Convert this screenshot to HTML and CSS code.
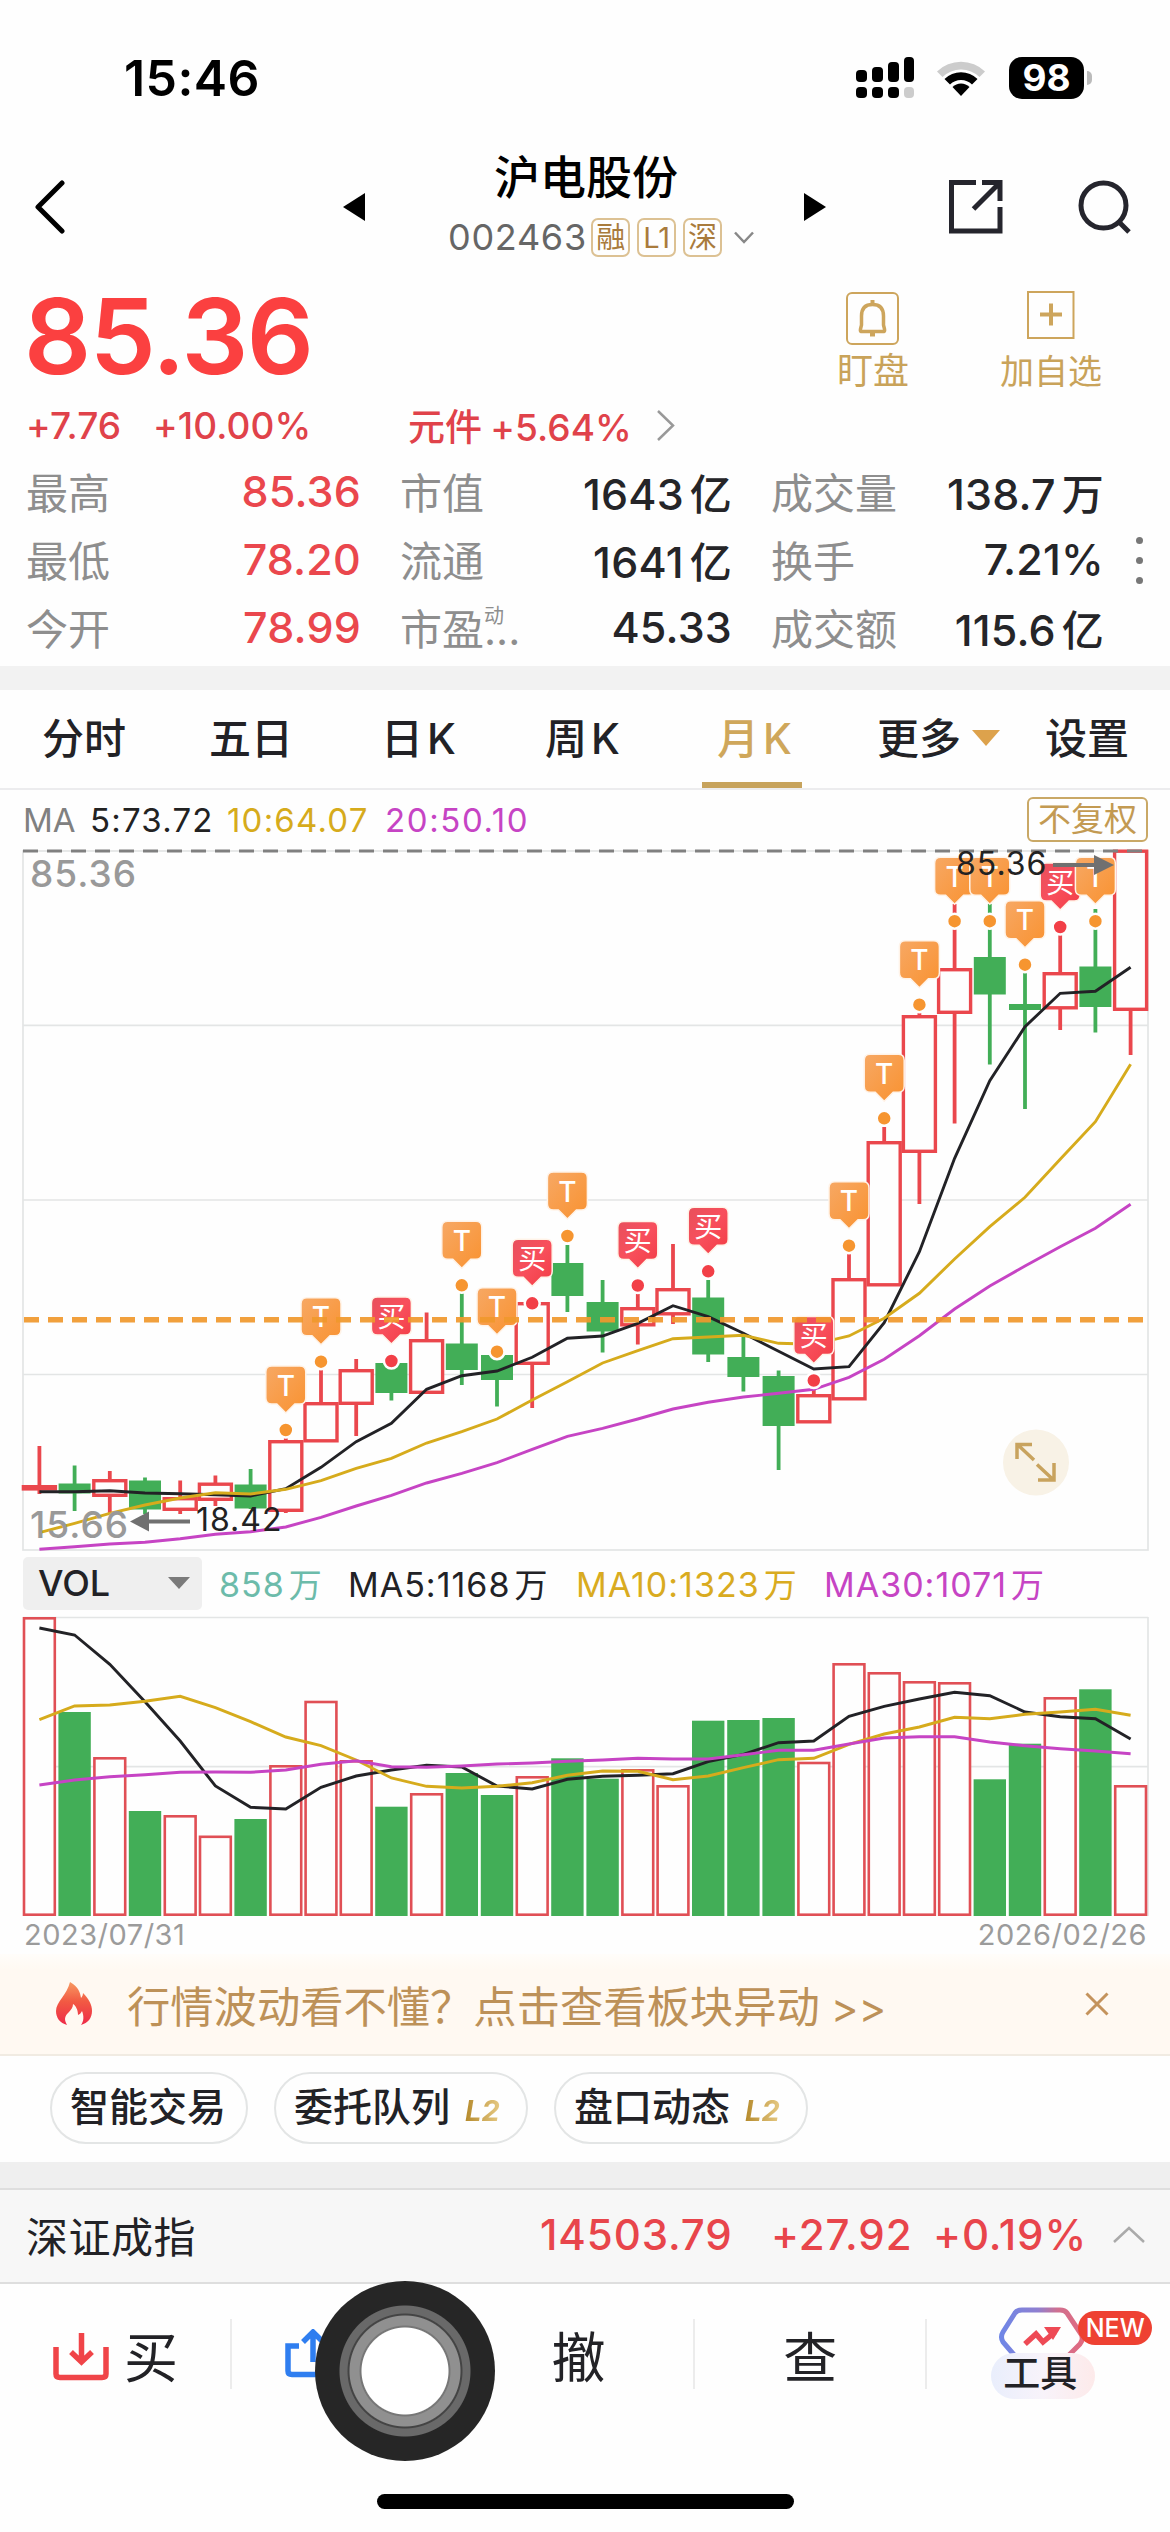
FILE: index.html
```html
<!DOCTYPE html>
<html lang="zh-CN">
<head>
<meta charset="UTF-8">
<meta name="viewport" content="width=device-width, initial-scale=1.0">
<title>沪电股份 002463</title>
<link rel="stylesheet" href="styles.css">
</head>
<body>
<div class="status-bar">
  <span class="time">15:46</span>
  <svg class="signal" width="54" height="42" viewBox="0 0 54 42">
    <rect x="0" y="13" width="11" height="12" rx="4"/>
    <rect x="16" y="10" width="11" height="15" rx="4"/>
    <rect x="32" y="5" width="11" height="20" rx="4"/>
    <rect x="48" y="0" width="10" height="25" rx="4"/>
    <rect x="0" y="30" width="11" height="11" rx="4"/>
    <rect x="16" y="30" width="11" height="11" rx="4"/>
    <rect x="32" y="30" width="11" height="11" rx="4"/>
    <rect x="48" y="30" width="10" height="11" rx="4" fill="#cccccc"/>
  </svg>
  <svg class="wifi" width="50" height="38" viewBox="0 0 50 38">
    <path d="M1 12.500A34.500 34.500 0 0 1 49 12.500L43.500 18A26.500 26.500 0 0 0 6.500 18Z" fill="#cccccc"/>
    <path d="M8.500 20A23.500 23.500 0 0 1 41.500 20L36 25.500A15.500 15.500 0 0 0 14 25.500Z"/>
    <path d="M16.500 28A12 12 0 0 1 33.500 28L25 37Z"/>
  </svg>
  <span class="battery">98</span>
  <span class="battery-nub"></span>
</div>

<div class="header">
  <svg class="back" width="32" height="54" viewBox="0 0 32 54"><path d="M28 3L4 27L28 51"/></svg>
  <svg class="prev" width="22" height="28" viewBox="0 0 22 28"><path d="M22 0V28L0 14Z"/></svg>
  <div class="title-box">
    <h1>沪电股份</h1>
    <div class="code-row">
      <span class="code">002463</span>
      <span class="tag">融</span>
      <span class="tag">L1</span>
      <span class="tag">深</span>
      <svg width="20" height="13" viewBox="0 0 20 13"><path d="M1 1.500L10 11L19 1.500"/></svg>
    </div>
  </div>
  <svg class="next" width="22" height="28" viewBox="0 0 22 28"><path d="M0 0V28L22 14Z"/></svg>
  <svg class="share" width="54" height="54" viewBox="0 0 54 54">
    <path d="M27 2.500H2.500V51H51V27M33 2.500H51V21M49.500 4L24.500 29"/>
  </svg>
  <svg class="search" width="54" height="54" viewBox="0 0 54 54">
    <circle cx="25.500" cy="25.500" r="22.500"/><path d="M41 42L51 52"/>
  </svg>
</div>

<div class="quote">
  <div class="price-box">
    <div class="price">85.36</div>
    <div class="change-row">
      <span class="chg">+7.76</span>
      <span class="pct">+10.00%</span>
      <span class="sector">元件 <b>+5.64%</b></span>
      <svg width="18" height="31" viewBox="0 0 18 31"><path d="M1 1L16 15.500L1 30"/></svg>
    </div>
  </div>
  <div class="action watch">
    <svg width="54" height="54" viewBox="0 0 54 54">
      <rect x="1" y="1" width="51" height="51" rx="5" stroke-width="2"/>
      <path d="M16 39.500C13 39.500 15 36 15.500 33V24C15.500 16 20 12.500 26.500 12.500S37.500 16 37.500 24V33C38 36 40 39.500 37 39.500Z" stroke-width="3.500"/>
      <path d="M26.500 8V12M24 42.500H29" stroke-width="4"/>
    </svg>
    <span>盯盘</span>
  </div>
  <div class="action add">
    <svg width="48" height="48" viewBox="0 0 48 48">
      <rect x="1" y="1" width="45.500" height="46" stroke-width="2"/>
      <path d="M24 12.500V34.500M13 23.500H35" stroke-width="4"/>
    </svg>
    <span>加自选</span>
  </div>
</div>

<div class="stats">
  <div class="cell"><span>最高</span><b class="up">85.36</b></div>
  <div class="cell"><span>市值</span><b>1643<i>亿</i></b></div>
  <div class="cell"><span>成交量</span><b>138.7<i>万</i></b></div>
  <div class="cell"><span>最低</span><b class="up">78.20</b></div>
  <div class="cell"><span>流通</span><b>1641<i>亿</i></b></div>
  <div class="cell"><span>换手</span><b>7.21%</b></div>
  <div class="cell"><span>今开</span><b class="up">78.99</b></div>
  <div class="cell"><span>市盈<sup>动</sup>...</span><b>45.33</b></div>
  <div class="cell"><span>成交额</span><b>115.6<i>亿</i></b></div>
  <div class="more-dots"><em></em><em></em><em></em></div>
</div>

<div class="tabs">
  <span>分时</span>
  <span>五日</span>
  <span>日<i>K</i></span>
  <span>周<i>K</i></span>
  <span class="active">月<i>K</i></span>
  <span class="more">更多</span>
  <span>设置</span>
</div>

<div class="ma-row">
  <span class="ma-name">MA</span>
  <span class="ma5">5:73.72</span>
  <span class="ma10">10:64.07</span>
  <span class="ma20">20:50.10</span>
  <span class="adjust">不复权</span>
</div>

<svg class="kline" id="kline" width="1170" height="708" viewBox="0 845 1170 708">
  <defs>
    <linearGradient id="gT" x1="0" y1="0" x2="1" y2="1">
      <stop offset="0" stop-color="#f7a864"/><stop offset="1" stop-color="#f99230"/>
    </linearGradient>
    <linearGradient id="gB" x1="0" y1="0" x2="1" y2="1">
      <stop offset="0" stop-color="#e8505c"/><stop offset="0.500" stop-color="#f84f5c"/><stop offset="1" stop-color="#f23c44"/>
    </linearGradient>
  </defs>
</svg>

<div class="vol-row">
  <span class="vol-select">VOL</span>
  <span class="vol-now">858<i>万</i></span>
  <span class="vol-ma5">MA5:1168<i>万</i></span>
  <span class="vol-ma10">MA10:1323<i>万</i></span>
  <span class="vol-ma30">MA30:1071<i>万</i></span>
</div>

<svg class="volume" id="volume" width="1170" height="305" viewBox="0 1613 1170 305"></svg>

<div class="dates"><span>2023/07/31</span><span>2026/02/26</span></div>

<div class="banner">
  <svg class="flame" width="38" height="44" viewBox="0 0 38 44">
    <defs><linearGradient id="gF" x1="0" y1="0" x2="0" y2="1">
      <stop offset="0" stop-color="#f79a62"/><stop offset="0.450" stop-color="#f25a43"/><stop offset="1" stop-color="#ee2a48"/>
    </linearGradient></defs>
    <path fill="url(#gF)" d="M15 0C24 5 25 11 26 16C27 15 28 13 28 11C34 17 37 23 37 29C37 36 33 41 26 43C29 39 29 34 27 29C26 31 25 32 23 33C23 28 21 24 18 22C18 29 10 31 10 37C10 39 11 41 12 43C5 41 1 36 1 29C1 20 12 13 15 0Z"/>
  </svg>
  <span class="banner-text">行情波动看不懂？点击查看板块异动<i>&gt;&gt;</i></span>
  <svg class="close" width="24" height="24" viewBox="0 0 24 24"><path d="M1.500 1.500L22.500 22.500M22.500 1.500L1.500 22.500"/></svg>
</div>

<div class="chips">
  <span class="chip">智能交易</span>
  <span class="chip wide">委托队列<i>L2</i></span>
  <span class="chip wide">盘口动态<i>L2</i></span>
</div>

<div class="index-bar">
  <span class="idx-name">深证成指</span>
  <span class="idx-val">14503.79</span>
  <span class="idx-chg">+27.92</span>
  <span class="idx-pct">+0.19%</span>
  <svg width="32" height="17" viewBox="0 0 32 17"><path d="M1 16L16 2L31 16"/></svg>
</div>

<div class="trade-bar">
  <div class="trade buy">
    <svg width="56" height="50" viewBox="0 0 56 50">
      <path d="M3 15V42Q3 45.500 7 45.500H49Q53 45.500 53 42V15" stroke-width="5.500"/>
      <path d="M28.500 1V30M18 20L28.500 30L39 20" stroke-width="5.500"/>
    </svg>
    <span>买</span>
  </div>
  <div class="trade sell">
    <svg width="56" height="50" viewBox="0 0 56 50">
      <path d="M14 17H3V42Q3 45.500 7 45.500H49Q53 45.500 53 42V17H42" stroke-width="5.500"/>
      <path d="M28 33V3M18 13L28 3L38 13" stroke-width="5.500"/>
    </svg>
    <div class="touch"></div>
  </div>
  <div class="trade"><span>撤</span></div>
  <div class="trade"><span>查</span></div>
  <div class="trade tools">
    <svg width="88" height="52" viewBox="0 0 88 52">
      <defs><linearGradient id="gH" x1="0" y1="0" x2="1" y2="0">
        <stop offset="0" stop-color="#6f86e6"/><stop offset="0.450" stop-color="#8f7fd0"/><stop offset="0.700" stop-color="#d0708f"/><stop offset="1" stop-color="#e06a80"/>
      </linearGradient></defs>
      <path d="M17 49L5 35Q2 30 5 25L17 6Q19 3 24 3H62Q67 3 69 6L83 27Q86 32 82 37L70 49" fill="none" stroke="url(#gH)" stroke-width="5"/>
      <path d="M27 37L38 27L45 35L57 25" fill="none" stroke="#ee4a55" stroke-width="5.500"/>
      <path d="M46 20H63L55 33Z" fill="#ee4a55"/>
    </svg>
    <span class="tools-label">工具</span>
    <span class="new-badge">NEW</span>
  </div>
</div>
<div class="home-indicator"></div>
<script src="chart.js"></script>
</body>
</html>
```
FILE: styles.css
```css
* {
  box-sizing: border-box;
}

body {
  margin: 0;
  width: 1170px;
  height: 2532px;
  overflow: hidden;
  background-color: #fefefe;
  color: #222226;
  font-family: Inter, "Noto Sans CJK SC", sans-serif;
}

i, em {
  font-style: normal;
}

svg {
  display: block;
  flex: none;
}

span, b {
  white-space: nowrap;
}

/* status bar */
.status-bar {
  display: flex;
  align-items: center;
  height: 156px;
  padding-left: 124px;
  color: #000;
}

.time {
  width: 732px;
  font-size: 50px;
  font-weight: 600;
  letter-spacing: 0.4px;
}

.signal {
  overflow: visible;
}

.wifi {
  margin-left: 26px;
}

.battery {
  width: 75px;
  height: 42px;
  margin-left: 23px;
  border-radius: 13px;
  background-color: #000;
  color: #fff;
  font-size: 37px;
  font-weight: 700;
  line-height: 42px;
  text-align: center;
}

.battery-nub {
  width: 5px;
  height: 14px;
  margin-left: 3px;
  border-radius: 0 5px 5px 0;
  background-color: #bbb;
}

/* header */
.header {
  display: flex;
  align-items: center;
  height: 102px;
  padding-left: 34px;
}

.back path {
  fill: none;
  stroke: #000;
  stroke-width: 5;
  stroke-linecap: round;
  stroke-linejoin: round;
}

.prev {
  margin-left: 277px;
}

.title-box {
  width: 306px;
  margin-left: 83px;
}

.title-box h1 {
  margin: -8px 0 0;
  padding-left: 46px;
  color: #000;
  font-size: 46px;
  font-weight: 500;
  line-height: 56px;
}

.code-row {
  display: flex;
  align-items: center;
  height: 40px;
  margin-top: 12px;
}

.code {
  width: 144px;
  color: #666;
  font-size: 36px;
  letter-spacing: 0.7px;
}

.tag {
  width: 39px;
  height: 39px;
  margin-right: 7px;
  border: 2px solid #dcc193;
  border-radius: 7px;
  color: #a97b3c;
  font-size: 29px;
  line-height: 35px;
  text-align: center;
}

.code-row svg {
  margin-left: 5px;
}

.code-row path {
  fill: none;
  stroke: #888;
  stroke-width: 2.5;
}

.next {
  margin-left: 50px;
}

.share {
  margin-left: 123px;
}

.search {
  margin-left: 75px;
}

.share path,
.search path,
.search circle {
  fill: none;
  stroke: #25252d;
  stroke-width: 5;
}

/* price */
.quote {
  display: flex;
  height: 200px;
  padding-left: 26px;
}

.price-box {
  width: 811px;
}

.price {
  margin-top: 26px;
  margin-left: -2px;
  color: #fb4040;
  font-size: 105px;
  font-weight: 600;
  letter-spacing: -1.4px;
  line-height: 104px;
}

.change-row {
  display: flex;
  align-items: center;
  height: 50px;
  margin-top: 12px;
  color: #e0424a;
  font-size: 37px;
  font-weight: 500;
  letter-spacing: 0.1px;
}

.chg {
  width: 127px;
}

.pct {
  width: 255px;
}

.sector {
  width: 249px;
}

.sector b {
  margin-left: -2px;
  font-weight: 500;
}

.change-row path {
  fill: none;
  stroke: #999;
  stroke-width: 2.5;
}

.action {
  display: flex;
  flex-direction: column;
  align-items: center;
  padding-top: 34px;
  color: #c9a35a;
}

.action path,
.action rect {
  fill: none;
  stroke: #cda55c;
}

.watch {
  width: 72px;
  font-size: 36px;
}

.watch span {
  margin-top: 3px;
  line-height: 44px;
}

.add {
  width: 102px;
  margin-left: 91px;
  padding-top: 33px;
  font-size: 34px;
}

.add span {
  margin-top: 11px;
  line-height: 44px;
}

/* stats */
.stats {
  position: relative;
  display: grid;
  grid-template-columns: 335px 332px 333px;
  column-gap: 39px;
  grid-auto-rows: 68px;
  height: 208px;
  padding-left: 26px;
}

.cell {
  display: flex;
  align-items: center;
  justify-content: space-between;
  color: #8e8e8e;
  font-size: 42px;
}

.cell span {
  padding-bottom: 4px;
}

.cell b {
  padding-bottom: 2px;
  color: #252528;
  font-size: 43px;
  font-weight: 500;
  letter-spacing: 0.2px;
}

.cell b i {
  margin-left: 6px;
  font-size: 42px;
}

.cell b.up {
  color: #ea474d;
}

.cell sup {
  display: inline-block;
  width: 0;
  font-size: 20px;
  line-height: 0;
  vertical-align: 22px;
}

.more-dots {
  position: absolute;
  top: 79px;
  right: 27px;
  display: flex;
  flex-direction: column;
  gap: 13px;
}

.more-dots em {
  width: 7px;
  height: 7px;
  border-radius: 50%;
  background-color: #777;
}

/* period tabs */
.tabs {
  display: grid;
  grid-template-columns: 167px 172px 164px 156px 176px 168px 110px;
  height: 124px;
  padding-left: 42px;
  border-top: 24px solid #f2f2f2;
  border-bottom: 2px solid #ececee;
  font-size: 42px;
  font-weight: 500;
}

.tabs span {
  padding-top: 18px;
  line-height: 62px;
}

.tabs i {
  margin-left: 4px;
}

.tabs .active {
  width: 100px;
  margin-left: 1px;
  padding-left: 15px;
  border-bottom: 6px solid #c7a35c;
  color: #cfa75b;
}

.tabs .more::after {
  content: "";
  display: inline-block;
  margin-left: 11px;
  vertical-align: 8px;
  border: 14px solid transparent;
  border-top: 16px solid #dda24c;
  border-bottom: 0;
}

/* moving average legend */
.ma-row {
  display: flex;
  align-items: center;
  height: 55px;
  padding: 4px 22px 0 23px;
  font-size: 33px;
  letter-spacing: 1.2px;
}

.ma-name {
  width: 67px;
  color: #808080;
  letter-spacing: 0;
}

.ma5 {
  width: 137px;
  color: #222;
}

.ma10 {
  width: 158px;
  color: #d6ab1c;
}

.ma20 {
  color: #c644c4;
  letter-spacing: 1.6px;
}

.adjust {
  width: 121px;
  height: 45px;
  margin-top: -1px;
  margin-left: auto;
  border: 2px solid #c9a866;
  border-radius: 6px;
  color: #c39a52;
  font-size: 33px;
  letter-spacing: 0;
  line-height: 40px;
  text-align: center;
}

.vol-row {
  display: flex;
  align-items: center;
  height: 60px;
  padding-left: 23px;
  font-size: 34px;
  letter-spacing: 1px;
}

.vol-row i {
  margin-left: 4px;
  font-size: 33px;
}

.vol-select {
  display: flex;
  align-items: center;
  justify-content: space-between;
  width: 179px;
  height: 53px;
  margin-right: 17px;
  padding: 0 12px 0 15px;
  border-radius: 5px;
  background-color: #efefef;
  font-size: 36px;
  font-weight: 500;
  letter-spacing: 0;
}

.vol-select::after {
  content: "";
  border: 11px solid transparent;
  border-top: 12px solid #7a7a7a;
  border-bottom: 0;
}

.vol-now {
  width: 129px;
  color: #6cbbaa;
}

.vol-ma5 {
  width: 228px;
}

.vol-ma10 {
  width: 248px;
  color: #d9ab20;
}

.vol-ma30 {
  color: #c644c4;
}

.dates {
  display: flex;
  justify-content: space-between;
  height: 36px;
  padding: 0 23px 0 24px;
  color: #9b9b9b;
  font-size: 29px;
  letter-spacing: 0.5px;
  line-height: 34px;
}

/* hint banner */
.banner {
  display: flex;
  align-items: center;
  height: 102px;
  padding-left: 55px;
  border-bottom: 2px solid #f1ebe2;
  background: linear-gradient(#fffdfa, #fff9f2 16px);
  color: #bd9158;
}

.banner-text {
  width: 958px;
  margin-left: 34px;
  font-size: 43.3px;
}

.banner-text i {
  margin-left: 11px;
  font-size: 42px;
}

.close path {
  fill: none;
  stroke: #c4935c;
  stroke-width: 3;
}

/* shortcut chips */
.chips {
  display: flex;
  gap: 26px;
  height: 106px;
  padding: 16px 0 0 50px;
}

.chip {
  width: 198px;
  height: 72px;
  padding-left: 18px;
  border: 2px solid #e3e5e5;
  border-radius: 36px;
  font-size: 39px;
  font-weight: 500;
  line-height: 66px;
}

.wide {
  width: 254px;
}

.chip i {
  margin-left: 15px;
  background: linear-gradient(90deg, #b58a2c, #e6c983);
  background-clip: text;
  color: transparent;
  font-size: 29px;
  font-style: italic;
  font-weight: 700;
}

/* index ticker */
.index-bar {
  display: flex;
  align-items: center;
  height: 122px;
  padding-left: 26px;
  padding-bottom: 2px;
  border-top: 26px solid #efefef;
  border-bottom: 2px solid #dedede;
  background-color: #f7f7f7;
  box-shadow: inset 0 2px 0 #dedede;
  color: #e8454b;
  font-size: 42px;
  font-weight: 500;
  letter-spacing: 0.9px;
}

.idx-name {
  width: 514px;
  color: #222226;
  font-weight: 400;
  letter-spacing: 0.5px;
}

.idx-val {
  width: 231px;
}

.idx-chg {
  width: 162px;
}

.idx-pct {
  width: 180px;
}

.index-bar path {
  fill: none;
  stroke: #aaa;
  stroke-width: 2.5;
}

/* bottom trade bar */
.trade-bar {
  display: flex;
  height: 208px;
  padding-top: 35px;
}

.trade {
  position: relative;
  display: flex;
  align-items: center;
  justify-content: center;
  width: 232px;
  height: 70px;
  border-right: 2px solid #ececec;
  font-size: 54px;
}

.buy {
  justify-content: flex-start;
  padding-left: 53px;
}

.buy svg {
  margin-top: 6px;
}

.buy span {
  margin-left: 15px;
}

.trade svg {
  fill: none;
}

.buy path {
  stroke: #f04448;
}

.sell {
  justify-content: flex-start;
  padding-left: 53px;
}

.sell path {
  stroke: #2f7ef0;
}

.touch {
  position: absolute;
  top: -38px;
  left: 83px;
  width: 180px;
  height: 180px;
  border-radius: 50%;
  background: radial-gradient(circle, #fff 0 43px, #777 44px 45px, #909090 46px 55px, #444 56px 57px, #696969 58px 65px, #262626 66px);
  z-index: 2;
}

.tools {
  width: 243px;
  border: none;
}

.tools svg {
  position: absolute;
  top: -12px;
  left: 71px;
}

.tools-label {
  position: absolute;
  top: 34px;
  left: 64px;
  width: 104px;
  height: 46px;
  border-radius: 23px;
  background: linear-gradient(90deg, #e9eefc, #f8f3fa 50%, #fdeaea);
  font-size: 37px;
  font-weight: 500;
  line-height: 42px;
  text-align: center;
  text-indent: -6px;
}

.new-badge {
  position: absolute;
  top: -8px;
  left: 151px;
  width: 74px;
  height: 34px;
  border-radius: 17px;
  background-color: #ee4132;
  color: #fff;
  font-size: 25px;
  font-weight: 500;
  line-height: 34px;
  text-align: center;
}

.home-indicator {
  width: 417px;
  height: 15px;
  margin: 2px auto 0;
  border-radius: 8px;
  background-color: #000;
}
```
FILE: chart.js
```js
const RED = '#ea474d';
const GREEN = '#42ae57';
const GRID = '#e3e5e5';
const STEP = 35.2;
const cx = i => 39.4 + i * STEP;

// color, body top, body bottom, high, low
const candles = [
  ['r', 1485, 1490.6, 1446, 1494], ['g', 1483.5, 1493.5, 1465.5, 1511],
  ['r', 1479, 1497, 1471, 1513], ['g', 1480.5, 1509.5, 1477.5, 1514],
  ['r', 1497, 1511, 1480.5, 1514], ['r', 1482.5, 1501, 1475.5, 1506],
  ['g', 1484.5, 1508.5, 1469, 1509], ['r', 1440, 1512, 1438, 1513],
  ['r', 1402, 1442.5, 1370, 1442], ['r', 1369, 1405, 1359, 1436],
  ['g', 1363, 1393, 1363, 1400.5], ['r', 1339, 1394, 1312.5, 1394],
  ['g', 1343.5, 1370, 1293, 1385], ['g', 1355, 1380, 1355, 1406.5],
  ['r', 1302, 1365, 1302, 1408], ['g', 1263, 1296, 1245, 1312],
  ['g', 1302, 1331.5, 1280, 1352.5], ['r', 1307, 1326.5, 1294, 1344.5],
  ['r', 1288, 1315.5, 1244, 1324], ['g', 1297.5, 1354.5, 1280, 1362],
  ['g', 1357, 1377, 1334, 1391.5], ['g', 1376, 1426, 1370.5, 1470],
  ['r', 1394, 1423.5, 1389, 1423], ['r', 1278, 1400.5, 1254, 1400],
  ['r', 1141, 1286.5, 1127, 1286], ['r', 1015, 1153, 1013, 1204],
  ['r', 968, 1014, 904, 1123.5], ['g', 957, 994.5, 904, 1064.5],
  ['g', 1004, 1010, 973, 1109], ['r', 972, 1009.5, 935, 1030],
  ['g', 966.5, 1007, 909, 1032.5], ['r', 849.5, 1011, 850, 1055]
];

const ma5 = [1491.7, 1491.7, 1490.7, 1493, 1493.7, 1494.7, 1496, 1488.7, 1467.3, 1441.7, 1423.3, 1389.3, 1375.7, 1371, 1357.3, 1338.3, 1336, 1323.3, 1305.7, 1316.7, 1333.3, 1351.3, 1369, 1366.7, 1322.7, 1251.7, 1158.3, 1080.7, 1026.7, 993.3, 991.3, 967.3];
const ma10 = [1532.7, 1523.3, 1513.3, 1505, 1498, 1492.7, 1494, 1489.3, 1480.7, 1468.3, 1458.3, 1443, 1431.7, 1419, 1400, 1381.7, 1363, 1350.7, 1338.7, 1337, 1335.3, 1343.3, 1344.3, 1336, 1318.3, 1293.3, 1259, 1226.7, 1197.3, 1159.3, 1121.7, 1064.3];
const ma20 = [1549.3, 1546.7, 1544, 1542.3, 1538.7, 1534.3, 1531.7, 1527, 1517.3, 1506, 1495.3, 1483, 1473.3, 1462.7, 1449.3, 1436.3, 1428.3, 1419, 1409, 1402.3, 1397, 1393.3, 1389.3, 1377.3, 1359.3, 1335.7, 1309, 1286, 1266, 1246.7, 1228.3, 1204.3];

// candle index, label, dot position
const marks = [
  [7, 'T', 1430], [8, 'T', 1361.7], [10, '买', 1361], [12, 'T', 1285.3],
  [13, 'T', 1351.7], [14, '买', 1303.3], [15, 'T', 1236], [17, '买', 1285.5],
  [19, '买', 1271.3], [22, '买', 1380.5], [23, 'T', 1245.7], [24, 'T', 1118.3],
  [25, 'T', 1004.7], [26, 'T', 921.2], [27, 'T', 921.2], [28, 'T', 964.7],
  [29, '买', 927], [30, 'T', 921.2]
];

const volumes = [
  ['r', 1617], ['g', 1712], ['r', 1757], ['g', 1811], ['r', 1815], ['r', 1835.5], ['g', 1819], ['r', 1765],
  ['r', 1700.7], ['r', 1760], ['g', 1806.7], ['r', 1793], ['g', 1773], ['g', 1795], ['r', 1776], ['g', 1758.3],
  ['g', 1778.7], ['r', 1769], ['r', 1785], ['g', 1720.7], ['g', 1720], ['g', 1718], ['r', 1761.7], ['r', 1663],
  ['r', 1672], ['r', 1681], ['r', 1682], ['g', 1779.3], ['g', 1743.7], ['r', 1697], ['g', 1689.3], ['r', 1785]
];
const vma5 = [1628, 1635, 1664.3, 1701.7, 1741, 1786, 1807.3, 1809, 1787.3, 1776, 1770, 1765.3, 1767, 1786, 1789, 1779.3, 1776.3, 1775.3, 1773.7, 1761.7, 1754.3, 1742.7, 1741, 1716.3, 1706.3, 1699, 1692.3, 1695.7, 1712, 1716.7, 1718.7, 1739];
const vma10 = [1719.7, 1706, 1705, 1701.3, 1696.3, 1707.7, 1721.7, 1737, 1745.7, 1760, 1778, 1786.3, 1788, 1786.3, 1782.7, 1775.3, 1771, 1771.3, 1779.7, 1776, 1767.7, 1759.7, 1758.3, 1744.3, 1734, 1727, 1717.3, 1718.7, 1714.3, 1712, 1709.3, 1715.3];
const vma30 = [1785, 1780, 1776.7, 1774.7, 1772.3, 1772, 1772.3, 1770, 1764.3, 1760.7, 1766.7, 1767.3, 1766, 1764, 1763, 1761.3, 1760, 1758.3, 1759, 1759, 1754.7, 1750.3, 1750.3, 1744, 1738, 1736.7, 1736.7, 1742, 1745.7, 1748.7, 1751, 1753.7];

function line(x1, y1, x2, y2, color, width, extra = '') {
  return `<line x1="${x1}" y1="${y1}" x2="${x2}" y2="${y2}" stroke="${color}" stroke-width="${width}" ${extra}/>`;
}

function curve(values, color) {
  const pts = values.map((y, i) => `${cx(i)},${y}`).join(' ');
  return `<polyline points="${pts}" fill="none" stroke="${color}" stroke-width="2.9"/>`;
}

function text(x, y, size, color, str, extra = '') {
  return `<text x="${x}" y="${y}" font-size="${size}" fill="${color}" ${extra}>${str}</text>`;
}

function drawCandle([color, top, bottom, high, low], i) {
  const x = cx(i);
  if (color === 'g') {
    return line(x, high, x, low, GREEN, 3.8) +
      `<rect x="${x - 16}" y="${top}" width="32" height="${bottom - top}" fill="${GREEN}"/>`;
  }
  return line(x, high, x, top + 2, RED, 3.8) + line(x, bottom - 2, x, low, RED, 3.8) +
    `<rect x="${x - 16}" y="${top + 1.7}" width="32" height="${bottom - top - 3.4}" fill="#fefefe" stroke="${RED}" stroke-width="3.4"/>`;
}

function drawMark([i, label, dot]) {
  const x = cx(i);
  const y = dot - 64;
  const buy = label === '买';
  return `<circle cx="${x}" cy="${dot}" r="7.500" fill="${buy ? '#f23f47' : '#f69530'}" stroke="#fefefe" stroke-width="2.500"/>` +
    `<path d="M${x - 14} ${y}h28q6 0 6 6v26q0 6 -6 6h-5l-9 9l-9 -9h-5q-6 0 -6 -6v-26q0 -6 6 -6z" fill="url(#${buy ? 'gB' : 'gT'})" stroke="#fff3e8" stroke-width="1.500"/>` +
    text(x, y + 29.5, 28, '#fff', label, `text-anchor="middle" font-weight="${buy ? 400 : 500}"`);
}

let k = '';
[1025.3, 1200, 1374.5].forEach(y => { k += line(23, y, 1148, y, GRID, 1.7); });
k += `<rect x="23" y="851" width="1125" height="699" fill="none" stroke="${GRID}" stroke-width="1.700"/>`;
k += candles.map(drawCandle).join('');
k += line(23, 851, 1148, 851, '#808080', 3, 'stroke-dasharray="15 9"');
k += curve(ma5, '#222226') + curve(ma10, '#d6ab1c') + curve(ma20, '#c644c4');
k += marks.map(drawMark).join('');
k += line(24, 1319.7, 1148, 1319.7, '#f0982c', 5.5, 'stroke-dasharray="15 9" stroke-opacity="0.920"');
k += text(30, 887, 37, '#999', '85.36', 'font-weight="500" letter-spacing="1"') + text(30, 1538, 37, '#999', '15.66', 'font-weight="500" letter-spacing="1"');
k += text(956, 875, 32, '#222', '85.36', 'letter-spacing="1"') + text(196, 1531, 32, '#222', '18.42', 'letter-spacing="1"');
k += line(1053, 865, 1096, 865, '#707070', 4) + '<path d="M1094 855L1114 865L1094 875Z" fill="#707070"/>';
k += line(147, 1521.5, 190, 1521.5, '#707070', 4) + '<path d="M149 1511.500L130 1521.500L149 1531.500Z" fill="#707070"/>';
// full screen button
k += '<circle cx="1036" cy="1462.500" r="33" fill="#f8f2e6"/>' +
  '<path d="M1017 1459V1444.500H1032M1018 1445L1034 1460M1054 1463V1480H1038M1037 1464.500L1053 1479.500" fill="none" stroke="#c8a35e" stroke-width="3.500"/>';
document.getElementById('kline').insertAdjacentHTML('beforeend', k);

let v = line(23, 1617.5, 1148, 1617.5, GRID, 1.7) + line(23, 1766.7, 1148, 1766.7, GRID, 1.7) +
  line(1148, 1617, 1148, 1916, GRID, 1.7);
volumes.forEach(([color, top], i) => {
  const x = cx(i);
  v += color === 'g'
    ? `<rect x="${x - 16.2}" y="${top}" width="32.4" height="${1916 - top}" fill="${GREEN}"/>`
    : `<rect x="${x - 15.4}" y="${top + 1.3}" width="30.8" height="${1916 - top - 2.6}" fill="#fefefe" stroke="#e04f55" stroke-width="2.600"/>`;
});
v += curve(vma5, '#222226') + curve(vma10, '#d6ab1c') + curve(vma30, '#c644c4');
document.getElementById('volume').insertAdjacentHTML('beforeend', v);
```
